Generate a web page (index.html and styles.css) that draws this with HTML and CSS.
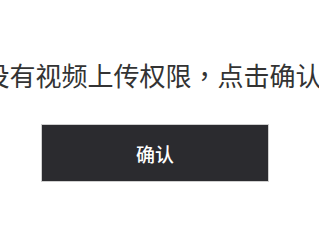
FILE: index.html
```html
<!DOCTYPE html>
<html lang="zh-CN">
<head>
<meta charset="utf-8">
<link rel="stylesheet" href="styles.css">
</head>
<body>
<div class="dialog">
  <p class="message">没有视频上传权限<span class="punct" lang="zh-TW">，</span>点击确认</p>
  <button class="confirm" type="button">确认</button>
</div>
</body>
</html>
```
FILE: styles.css
```css
html, body {
  margin: 0;
  padding: 0;
  background: #ffffff;
}
body {
  width: 319px;
  height: 240px;
  overflow: hidden;
  font-family: "Noto Sans CJK SC", "Noto Sans", sans-serif;
}
.dialog {
  width: 310px;
  display: flex;
  flex-direction: column;
  align-items: center;
  padding-top: 57px;
}
.message {
  margin: 0 5px 0 0;
  white-space: nowrap;
  flex-shrink: 0;
  font-size: 26px;
  line-height: 36px;
  color: #333333;
}
.punct {
  font-family: "Noto Sans CJK TC", "Noto Sans CJK SC", sans-serif;
}
.confirm {
  margin-top: 31px;
  width: 228px;
  height: 58px;
  border: 1px solid #cfcfcf;
  background: #2b2b2f;
  color: #ffffff;
  font-family: "Noto Sans CJK SC", sans-serif;
  font-size: 19px;
  font-weight: 500;
  padding: 0;
}
```
